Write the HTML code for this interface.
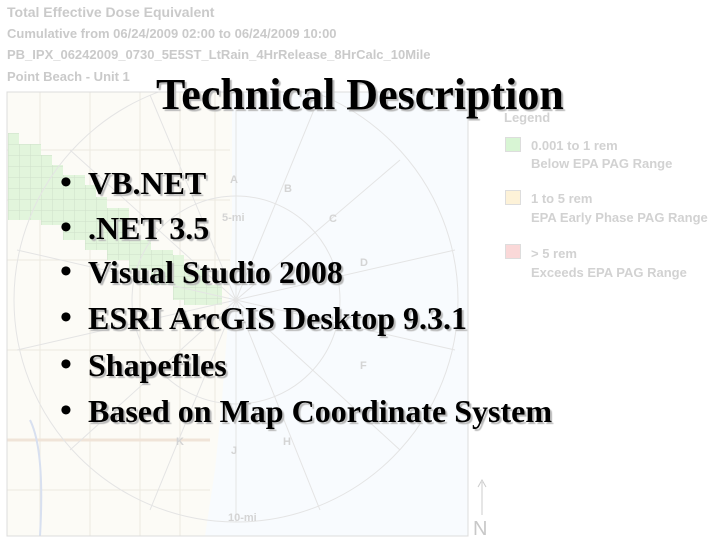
<!DOCTYPE html>
<html><head><meta charset="utf-8"><style>
html,body{margin:0;padding:0;background:#fff;}
#w{position:relative;width:720px;height:540px;overflow:hidden;background:#fff;font-family:"Liberation Sans",sans-serif;}
.hd{position:absolute;left:7px;color:#cacaca;font-weight:bold;font-size:13px;white-space:nowrap;}
.t{position:absolute;font-family:"Liberation Serif",serif;font-weight:bold;color:#000;text-shadow:2px 2px 1px #b8b8b8;white-space:nowrap;}
.b{position:absolute;left:60px;font-family:"Liberation Serif",serif;font-size:34px;font-weight:bold;line-height:34px;}
.lg{position:absolute;color:#d2d2d2;font-weight:bold;font-size:13px;white-space:nowrap;}
.sw{position:absolute;left:505px;width:14px;height:13px;border:1px solid #ddd;}
</style></head><body><div id="w">
<svg width="720" height="540" style="position:absolute;left:0;top:0">
<defs>
<pattern id="g" x="8" y="133" width="11" height="11" patternUnits="userSpaceOnUse">
<rect width="11" height="11" fill="#e2f5dc"/><path d="M0 0H11M0 0V11" stroke="#cfe0ca" stroke-width="1"/></pattern>
<clipPath id="m"><rect x="7" y="92" width="461" height="444"/></clipPath>
</defs>
<g clip-path="url(#m)">
<rect x="7" y="92" width="461" height="444" fill="#fcfbf6"/>
<polygon points="232,92 468,92 468,536 205,536 215,470 222,400 228,320 232,230" fill="#f8fbfe"/>
<g stroke="#ece9e0" stroke-width="1" fill="none">
<path d="M7 150H230M7 200H230M7 260H230M7 350H215M7 440H210M7 490H210"/>
<path d="M40 92V536M90 92V536M140 92V536M180 92V536M215 92V420"/>
</g>
<path d="M7 440H210" stroke="#f0e4d8" stroke-width="3"/>
<path d="M30 420 Q45 450 40 536" stroke="#d8e0f0" stroke-width="2" fill="none"/>
<path fill="url(#g)" d="M8 133H19V144H41V155H52V165H63V175H85V185H96V197H107V208H129V240H151V250H173V255H184V270H206V285H222V305H184V300H173V285H151V270H129V260H107V250H85V240H63V225H41V220H8Z"/>
<g stroke="#e4e4e4" stroke-width="1" fill="none">
<circle cx="236" cy="300" r="222"/>
<circle cx="236" cy="300" r="104"/>
<path d="M236 300L236 78M236 300L320 95M236 300L400 160M236 300L455 250M236 300L455 350M236 300L400 450M236 300L320 510M236 300L236 522M236 300L150 510M236 300L70 450M236 300L17 350M236 300L17 250M236 300L70 150M236 300L150 95"/>
</g>
<g fill="#d4d4d4" font-size="11" font-weight="bold" font-family="Liberation Sans,sans-serif">
<text x="230" y="183">A</text><text x="284" y="192">B</text><text x="329" y="222">C</text><text x="360" y="266">D</text><text x="360" y="369">F</text><text x="176" y="445">K</text><text x="231" y="454">J</text><text x="283" y="445">H</text>
<text x="222" y="221">5-mi</text><text x="228" y="521">10-mi</text>
</g>
</g>
<rect x="7" y="92" width="461" height="444" fill="none" stroke="#dcdcdc"/>
<path d="M482 515V482M478 487L482 480L486 487" stroke="#ccc" fill="none"/>
<text x="473" y="535" fill="#c8c8c8" font-size="20" font-family="Liberation Sans,sans-serif">N</text>
</svg>
<div class="hd" style="top:4px;font-size:14px">Total Effective Dose Equivalent</div>
<div class="hd" style="top:26px">Cumulative from 06/24/2009 02:00 to 06/24/2009 10:00</div>
<div class="hd" style="top:47px">PB_IPX_06242009_0730_5E5ST_LtRain_4HrRelease_8HrCalc_10Mile</div>
<div class="hd" style="top:69px">Point Beach - Unit 1</div>
<div class="lg" style="left:504px;top:110px">Legend</div>
<div class="sw" style="top:137px;background:#d8f5d4"></div>
<div class="lg" style="left:531px;top:138px">0.001 to 1 rem</div>
<div class="lg" style="left:531px;top:156px">Below EPA PAG Range</div>
<div class="sw" style="top:190px;background:#fdf2d8"></div>
<div class="lg" style="left:531px;top:191px">1 to 5 rem</div>
<div class="lg" style="left:531px;top:210px">EPA Early Phase PAG Range</div>
<div class="sw" style="top:244px;background:#fad8d8"></div>
<div class="lg" style="left:531px;top:246px">&gt; 5 rem</div>
<div class="lg" style="left:531px;top:265px">Exceeds EPA PAG Range</div>
<div class="t" style="left:156px;top:69px;font-size:44px">Technical Description</div>
<div class="b" style="top:166px">•</div><div class="t" style="left:88px;top:165px;font-size:32px">VB.NET</div>
<div class="b" style="top:211px">•</div><div class="t" style="left:88px;top:210px;font-size:32px">.NET 3.5</div>
<div class="b" style="top:255px">•</div><div class="t" style="left:88px;top:254px;font-size:32px">Visual Studio 2008</div>
<div class="b" style="top:301px">•</div><div class="t" style="left:88px;top:300px;font-size:32px">ESRI ArcGIS Desktop 9.3.1</div>
<div class="b" style="top:348px">•</div><div class="t" style="left:88px;top:347px;font-size:32px">Shapefiles</div>
<div class="b" style="top:394px">•</div><div class="t" style="left:88px;top:393px;font-size:32px">Based on Map Coordinate System</div>
</div></body></html>
